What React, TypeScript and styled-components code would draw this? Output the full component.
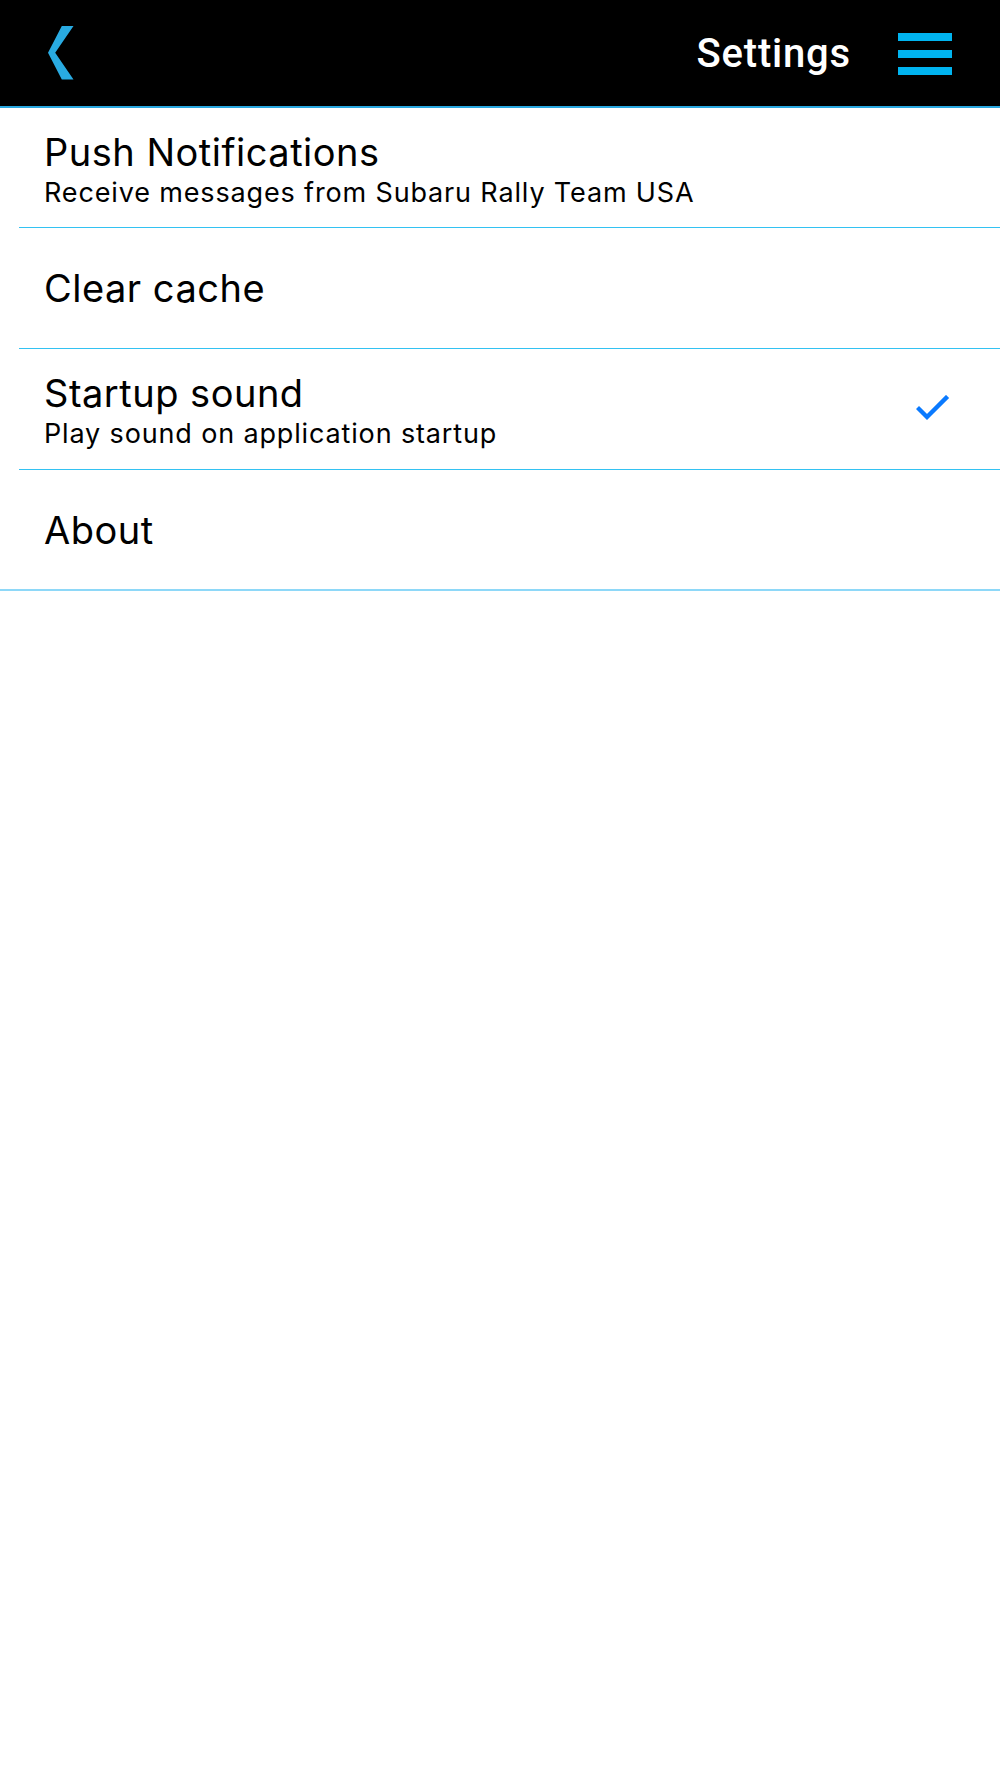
import React from 'react';
import { styled, createGlobalStyle } from 'styled-components';

const GlobalStyle = createGlobalStyle`
  html, body {
    margin: 0;
    padding: 0;
    background: #ffffff;
  }
`;

interface SettingItem {
  title: string;
  subtitle?: string;
  checked?: boolean;
}

const items: SettingItem[] = [
  { title: 'Push Notifications', subtitle: 'Receive messages from Subaru Rally Team USA' },
  { title: 'Clear cache' },
  { title: 'Startup sound', subtitle: 'Play sound on application startup', checked: true },
  { title: 'About' },
];

const BackIcon = () => (
  <svg width="26" height="54" viewBox="0 0 26 54">
    <polygon points="13.8,0 25.5,0 7.2,26.7 25.5,53.4 13.8,53.4 0,26.7" fill="#29abe2" />
  </svg>
);

const CheckIcon = () => (
  <svg width="34" height="28" viewBox="0 0 34 28">
    <polyline
      points="3,14 11,22 30,3"
      fill="none"
      stroke="#0a7aff"
      strokeWidth="4.4"
      strokeLinecap="square"
    />
  </svg>
);

const App: React.FC = () => {
  return (
    <Page>
      <GlobalStyle />
      <Header>
        <BackButton aria-label="Back">
          <BackIcon />
        </BackButton>
        <HeaderTitle>Settings</HeaderTitle>
        <MenuButton aria-label="Menu">
          <span />
          <span />
          <span />
        </MenuButton>
      </Header>
      <List>
        {items.map((item, i) => (
          <Row key={item.title} $last={i === items.length - 1}>
            <TextArea $withSub={!!item.subtitle}>
              <Title>{item.title}</Title>
              {item.subtitle && <Subtitle>{item.subtitle}</Subtitle>}
            </TextArea>
            {item.checked && (
              <Check>
                <CheckIcon />
              </Check>
            )}
          </Row>
        ))}
      </List>
    </Page>
  );
};

const Page = styled.div`
  width: 1000px;
  min-height: 1778px;
  background: #ffffff;
`;

const Header = styled.header`
  height: 106px;
  background: #000000;
  border-bottom: 2px solid #29a8e0;
  display: flex;
  flex-flow: row nowrap;
  align-items: center;
  padding: 0 48px;
`;

const BackButton = styled.div`
  display: flex;
  align-items: center;
`;

const HeaderTitle = styled.h1`
  margin: 0 47px 0 auto;
  font-family: Roboto, 'Liberation Sans', sans-serif;
  font-weight: 500;
  font-size: 40px;
  color: #ffffff;
  letter-spacing: 0.8px;
`;

const MenuButton = styled.div`
  width: 54px;
  display: flex;
  flex-direction: column;
  gap: 9px;
  margin-top: 2px;

  span {
    display: block;
    height: 8px;
    background: #00b4f0;
  }
`;

const List = styled.ul`
  margin: 0;
  padding: 0;
  list-style: none;
`;

const Row = styled.li<{ $last?: boolean }>`
  box-sizing: border-box;
  height: 121px;
  margin-left: ${(p) => (p.$last ? '0' : '19px')};
  padding: 0 50px 0 ${(p) => (p.$last ? '44px' : '25px')};
  border-bottom: ${(p) => (p.$last ? '2px solid #8ed8f8' : '1px solid #33c2f2')};
  display: flex;
  flex-flow: row nowrap;
  align-items: center;
  gap: 0.6rem;
  font-family: Inter, 'Noto Sans', sans-serif;
  color: #000000;

  &:first-child {
    height: 120px;
  }
`;

const TextArea = styled.div<{ $withSub?: boolean }>`
  flex-grow: 1;
  display: flex;
  flex-direction: column;
  white-space: nowrap;
  padding-top: ${(p) => (p.$withSub ? '8px' : '0')};
`;

const Title = styled.span`
  font-size: 38px;
  line-height: 42px;
  letter-spacing: 0.5px;
`;

const Subtitle = styled.span`
  font-size: 27px;
  line-height: 40px;
  letter-spacing: 0.85px;
`;

const Check = styled.span`
  display: flex;
  align-items: center;
`;

export default App;
